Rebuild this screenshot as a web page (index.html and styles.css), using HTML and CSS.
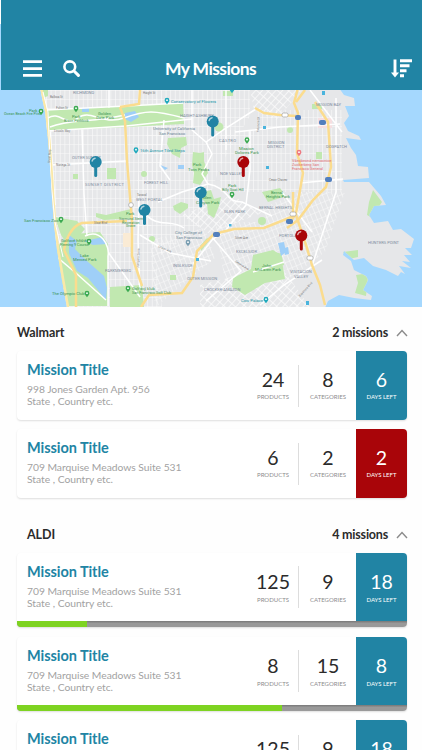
FILE: index.html
```html
<!DOCTYPE html>
<html lang="en">
<head>
  <meta charset="UTF-8" />
  <meta name="viewport" content="width=device-width, initial-scale=1.0"/>
  <title>My Missions</title>
  <link rel="stylesheet" href="styles.css">
</head>
<body>
  <header class="topbar">
    <svg class="icon-menu" viewBox="0 0 19 17"><path d="M0 1.7h19M0 8.7h19M0 15.3h19" stroke="#fff" stroke-width="2.8"/></svg>
    <svg class="icon-search" viewBox="0 0 17 17"><circle cx="6.8" cy="6.8" r="5.4" fill="none" stroke="#fff" stroke-width="2.6"/><path d="M11 11l4.4 4.4" stroke="#fff" stroke-width="3" stroke-linecap="round"/></svg>
    <h1>My Missions</h1>
    <svg class="icon-sort" viewBox="0 0 21 19"><path d="M4 .5v14M9 1.8h12M9 6.7h9.500M9 11.8h6.500M9 16.8h4" stroke="#fff" stroke-width="2.900"/><path d="M0 13.500h8l-4 5z" fill="#fff"/></svg>
  </header>

  <svg class="map" viewBox="0 90 422 217" preserveAspectRatio="none">
    <defs>
      <clipPath id="land">
        <path d="M40 88L45 112 48 140 51 180 52 198 54 225 57 250 62 280 67 308H325L328 301 339 295 354 298 371 300 372 296 363 290 368 280 366 276 354 270 351 261 343 255 344 251 354 260 364 258 373 266 386 270 398 276 401 272 405 274 399 266 411 268 402 261 410 262 404 255 412 255 405 248 411 248 414 239 401 229 393 230 388 221 374 223 369 215 374 206 386 205 381 196 369 182 344 182 343 180 369 178 368 167 358 166 356 155 351 148 346 138 361 140 359 136 348 131 344 123 349 116 345 106 355 106 354 98 344 95 339 88Z"/>
      </clipPath>
      <pattern id="blocks" width="4.6" height="9" patternUnits="userSpaceOnUse"><path d="M0 0H4.6M0 0V9" stroke="#fafafa" stroke-width="1.2"/></pattern>
      <pattern id="diagonal" width="5" height="7" patternUnits="userSpaceOnUse" patternTransform="rotate(42)"><path d="M0 0H5M0 0V7" stroke="#fcfcfc" stroke-width="1.4"/></pattern>
      <pattern id="slant" width="4.6" height="7" patternUnits="userSpaceOnUse" patternTransform="rotate(-22)"><path d="M0 0H4.6M0 0V7" stroke="#fafafa" stroke-width="1.1"/></pattern>
      <g id="pin">
        <path d="M0 4V13.5" stroke-width="3" stroke-linecap="round" stroke="currentColor"/>
        <circle r="6" fill="currentColor"/>
        <path d="M-3.6-1A4 4 0 0 1-.6-3.8" stroke="#fff" stroke-opacity=".65" fill="none" stroke-width="1.4" stroke-linecap="round"/>
      </g>
      <g id="place"><path d="M0 3.2C-1 1.5-2.4.8-2.4-.8A2.4 2.4 0 0 1 2.4-.8C2.4.8 1 1.5 0 3.2Z" fill="currentColor"/><circle cy="-.8" r=".9" fill="#fff"/></g>
    </defs>
    <rect y="88" width="422" height="220" fill="#a5d8fe"/>
    <g clip-path="url(#land)">
      <rect y="88" width="422" height="220" fill="#e6e7e9"/>
      <path d="M40 88h116l8 70-14 60 12 90H40z" fill="url(#blocks)"/>
      <path d="M156 88h94v28l-30 50-20 60-40 30-30-40z" fill="url(#blocks)"/>
      <path d="M258 110h84v82h-84zM220 130h40v62h-40z" fill="url(#blocks)"/>
      <path d="M250 88h54l-28 32-22-10z" fill="url(#diagonal)"/>
      <path d="M300 192h45l-20 60-35 26-28-70zM215 222h70v60h-60zM150 240l55-12 10 30-60 50z" fill="url(#slant)"/>
      <path d="M182 215l50-20 30 18-54 20zM200 285l80-20 30 42h-110z" fill="url(#diagonal)"/>

      <!-- parks -->
      <g fill="#c1e8b0">
        <path d="M46 110L122 106 183 103 184 124 127 127 48 131Z"/>
        <path d="M40 88h8v8l-5 2z"/>
        <path d="M168 138l18-1 1 8-6 3-1 10-8-4-5-10zM193 152l7 1 4-1v9l4 12-8 12-7-2 1-10-2-8z"/>
        <path d="M55 217l22 4 8 8-16 18-8-12zM56 246l18-12 26-2 8 12v62H68l-8-30zM110 287l32-2 2 22h-34z"/>
        <path d="M96 213l10 2 25-6 2 9-13 1-16 1-8-3z"/>
        <path d="M233 278l18-9 2-14 20-5 8 5 4 24-20 4-20 12-13-8zM272 255l9-2 3 12-8 2z"/>
        <path d="M203 192l8-2 3 9 7-2-2 9-5 12-6-4-1-10-6-6zM173 206l8-4 7 2v4l-8 6-6-4zM262 192l18-4 6 8-18 6z"/>
        <path d="M369 202l4-12 9 12-8 12 15 6-10 2-12-7zM356 275l7-1 5 4-2 18-11-3 3-10zM107 168h9v11h-9zM73 174h5v5h-5zM223 91h10v5h-10zM316 152h6v7h-6zM343 252l15-2v7l-9 2zM170 275h6v5h-6zM312 104h10v5h-10zM200 246l7-8 3 2-9 11z"/>
        <circle cx="152" cy="239" r="3"/><circle cx="262" cy="221" r="4"/><circle cx="290" cy="130" r="3"/><circle cx="219" cy="127" r="4.5"/><circle cx="144" cy="174" r="3"/>
      </g>
      <path d="M123 233h8v14h-8z" fill="#faebd5"/>
      <path d="M318 118h14v10h-14z" fill="#f6dfe1"/>

      <!-- lakes -->
      <path d="M69 235l8 6-2 8 12 12 17 15 3 12-1 12-18-22-11-7-8-18zM84 241l10-2 8-2 5 7-14 1zM125 113l10-2 4 6-8 5-6-3zM82 108h7v4h-7zM160 165l8 3-3 2zM178 165h6v4h-6zM278 243l6-1 2 10-5 4zM284 248l4-1 1 7-4 1z" fill="#9fcff8"/>

      <!-- side roads -->
      <g fill="none" stroke="#fff" stroke-width="1.5">
        <path d="M46 110l80-4 57-3M48 131l78-5 66-7M51 165l75-4M109 88v20M82 129l2 65 3 42M50 130l5 75"/>
        <path d="M48 118c12-8 18 10 30 0s24 8 46 0 30-8 60 0M50 127c20-8 40-4 75-12"/>
        <path d="M139 200l-1 40 2 50M140 235l30 18 41 8M164 120l-4 46 10 14M206 142l6 12-10 20 6 10-26 8-24 10M192 90v40l14 12 20-14 30-19M226 90v60M235 132l45-5 60-3M250 130v40l-4 35-20 25-14 10-22 28M336 98v94l-24 74M300 183l43-4M282 192l30 40M310 90l32 42"/>
        <path d="M85 236c16-8 25 10 23 20v50M108 252l32 45M57 257l20 17 29 26M142 210c14 20 28 8 42 18M211 236l30 35-35 30M253 272l31-10M260 305l24-20 38-25M208 184c22 4 16 18 34 18l30 14"/>
      </g>
      <!-- highways -->
      <g fill="none" stroke="#fbdc8e" stroke-width="2.5">
        <path d="M120 107l5 14 2 40 5 60v35l10 30M120 107l19-3 1-14"/>
        <path d="M255 108l9 5 16 2 16 1M298 88l-4 15 4 10-1 40 6 20-7 40-6 10M296 102l9-12M315 102l13 20 3 45-5 20-13 13-15 20-11 8"/>
        <path d="M141 307l8-12 33-2 11-16 4-26 17-17 20-5 30-1 20-8 12-5 10 30 6 20 8 20 5 20M293 192v20"/>
        <path d="M64 250c2-12 8-24 18-27l45-2M64 250l12 25v32"/>
      </g>
      <path d="M41 88L46 112 49 140 52 180 53 198 55 225 58 250 63 280 68 308" fill="none" stroke="#fae8a8" stroke-width="3"/>
      <path d="M43 92l5 20 3 70 4 40 8 35" fill="none" stroke="#fff" stroke-width="1"/>
    </g>

    <g class="shields">
      <rect x="295" y="115" width="6" height="5" rx="2"/><rect x="319" y="120" width="7" height="5" rx="2"/><rect x="325" y="177" width="7" height="5" rx="2"/><rect x="286" y="219" width="7" height="5" rx="2"/><rect x="213" y="232" width="7" height="5" rx="2"/>
    </g>
    <g fill="#fff" stroke="#a0a0a0" stroke-width=".7"><rect x="282" y="113" width="6" height="4" rx="1.5"/><rect x="290" y="212" width="6" height="4" rx="1.5"/><rect x="307" y="256" width="6" height="4" rx="1.5"/><circle cx="131" cy="205" r="2.4"/></g>

    <g class="area">
      <text x="73" y="94">RICHMOND</text>
      <text x="180" y="117">HAIGHT-ASHBURY</text>
      <text x="72" y="159">OUTER SUNSET</text>
      <text x="85" y="185.500" textLength="39">SUNSET DISTRICT</text>
      <text x="144" y="184">FOREST HILL</text>
      <text x="136" y="201">WEST PORTAL</text>
      <text x="219" y="142" textLength="17">CASTRO</text>
      <text x="268" y="144">MISSION</text><text x="267" y="148">DISTRICT</text>
      <text x="316" y="106">MISSION BAY</text>
      <text x="326" y="148">DOGPATCH</text>
      <text x="220" y="175">NOE VALLEY</text>
      <text x="224" y="213">GLEN PARK</text>
      <text x="259" y="209">BERNAL HEIGHTS</text>
      <text x="279" y="237">PORTOLA</text>
      <text x="236" y="253">EXCELSIOR</text>
      <text x="290" y="273">VISITACION</text><text x="294" y="277.500">VALLEY</text>
      <text x="368" y="243.500">HUNTERS POINT</text>
      <text x="105" y="271.500">PARKMERGED</text>
      <text x="173" y="267">INGLESIDE</text>
      <text x="187" y="280">OUTER MISSION</text>
      <text x="204" y="291">CROCKER-AMAZON</text>
    </g>
    <g class="spot">
      <text x="29" y="111.500">Park</text><text x="4" y="115" class="tiny">Ocean Beach Fire Pits</text>
      <text x="72" y="117.500">Park</text><text x="64" y="122" class="tiny">Bison Paddock</text>
      <text x="98" y="114.500">Golden</text><text x="96" y="119">Gate Park</text>
      <text x="193" y="166">Park</text><text x="188" y="170.500">Twin Peaks</text>
      <text x="203" y="199">Glen</text><text x="196" y="203.500">Canyon Park</text>
      <text x="239" y="149.500">Mission</text><text x="235" y="153.500">Dolores Park</text>
      <text x="228" y="187">Park</text><text x="222" y="191" class="tiny">Billy Goat Hill</text>
      <text x="271" y="194">Bernal</text><text x="266" y="198">Heights Park</text>
      <text x="126" y="215">Park</text><text x="119" y="219.500" class="tiny">Sigmund Stern</text><text x="122" y="223.500" class="tiny">Recreation</text><text x="126" y="227" class="tiny">Grove</text>
      <text x="24" y="221.500">San Francisco Zoo</text>
      <text x="61" y="241.500">Golfové hřiště</text><text x="60" y="245.500" class="tiny">Fleming 9 Course</text>
      <text x="80" y="256.500">Lake</text><text x="73" y="261">Merced Park</text>
      <text x="52" y="295">The Olympic Club</text>
      <text x="132" y="289.500">Golfový klub</text><text x="132" y="293.500" class="tiny">San Francisco Golf Club</text>
      <text x="262" y="266.500">John</text><text x="255" y="271">McLaren Park</text>
    </g>
    <g class="sight">
      <text x="171" y="102.500">Conservatory of Flowers</text>
      <text x="140" y="152">16th Avenue Tiled Steps</text>
      <text x="241" y="302">Cow Palace</text>
    </g>
    <g class="school">
      <text x="153" y="130">University of California</text><text x="159" y="134.500">San Francisco</text>
      <text x="175" y="234">City College of</text><text x="176" y="238.500">San Francisco</text>
    </g>
    <g class="hospital"><text x="292" y="162">Všeobecná nemocnice</text><text x="292" y="166">Zuckerberg San</text><text x="292" y="170">Francisco General</text></g>
    <g class="street">
      <text x="50" y="98">Balboa St</text><text x="56" y="109">Fulton St</text><text x="54" y="132">Lincoln Way</text><text x="56" y="166">Noriega St</text><text x="143" y="94">Haight St</text><text x="94" y="223.500">Sloat Blvd</text><text x="269" y="181">Cesar Chavez</text><text x="137" y="196">Taraval</text><text x="235" y="239">Silver Ave</text>
      <text transform="translate(50 163) rotate(-87)">Great Hwy</text><text transform="translate(139 268) rotate(-88)">Junipero Serra</text><text transform="translate(259 132) rotate(-88)">Valencia St</text><text transform="translate(158 247) rotate(24)">Ocean Ave</text><text transform="translate(300 297) rotate(-48)">Bayshore Blvd</text><text transform="translate(235 262) rotate(32)">Geneva Ave</text>
    </g>

    <g color="#3caa52">
      <use href="#place" x="41" y="112"/><use href="#place" x="76" y="109"/><use href="#place" x="247" y="140.500"/><use href="#place" x="232" y="195"/><use href="#place" x="61" y="220"/><use href="#place" x="89" y="242"/><use href="#place" x="87" y="294"/><use href="#place" x="128" y="289"/>
    </g>
    <g color="#20a9bc"><use href="#place" x="167" y="101"/><use href="#place" x="136" y="150.500"/><use href="#place" x="266" y="300"/><use href="#place" x="232" y="90"/></g>
    <use href="#place" x="299" y="153" color="#ee7981"/>
    <use href="#place" x="188" y="243" color="#789db1"/>
    <path d="M322 91h3v4h-3zM306 301h3v4h-3zM263 126h3v3h-3zM266 166h3v3h-3zM229 224h2.500v2.500h-2.500zM196 258h3v3h-3z" fill="#4ab4dd"/>

    <g color="#2184a4">
      <use href="#pin" x="95.700" y="162"/><use href="#pin" x="212.700" y="121.500"/><use href="#pin" x="200.700" y="192.500"/><use href="#pin" x="144.500" y="210"/>
    </g>
    <g color="#a90509">
      <use href="#pin" x="243.300" y="162"/><use href="#pin" x="301.300" y="235.500"/>
    </g>
  </svg>

  <main>
    <section class="store">
      <div class="store-head">
        <h2>Walmart</h2>
        <span>2 missions</span>
        <svg class="chevron" viewBox="0 0 12 8"><path d="M1 7l5-5.500 5 5.500" fill="none" stroke="#8b8b8b" stroke-width="1.400"/></svg>
      </div>
      <article class="card">
        <div class="row">
          <div class="info"><h3>Mission Title</h3><p>998 Jones Garden Apt. 956<br>State , Country etc.</p></div>
          <div class="stat products"><b>24</b><small>PRODUCTS</small></div>
          <div class="stat categories"><b>8</b><small>CATEGORIES</small></div>
          <div class="stat days"><b>6</b><small>DAYS LEFT</small></div>
        </div>
      </article>
      <article class="card">
        <div class="row">
          <div class="info"><h3>Mission Title</h3><p>709 Marquise Meadows Suite 531<br>State , Country etc.</p></div>
          <div class="stat products"><b>6</b><small>PRODUCTS</small></div>
          <div class="stat categories"><b>2</b><small>CATEGORIES</small></div>
          <div class="stat days urgent"><b>2</b><small>DAYS LEFT</small></div>
        </div>
      </article>
    </section>

    <section class="store started">
      <div class="store-head">
        <h2>ALDI</h2>
        <span>4 missions</span>
        <svg class="chevron" viewBox="0 0 12 8"><path d="M1 7l5-5.500 5 5.500" fill="none" stroke="#8b8b8b" stroke-width="1.400"/></svg>
      </div>
      <article class="card">
        <div class="row">
          <div class="info"><h3>Mission Title</h3><p>709 Marquise Meadows Suite 531<br>State , Country etc.</p></div>
          <div class="stat products"><b>125</b><small>PRODUCTS</small></div>
          <div class="stat categories"><b>9</b><small>CATEGORIES</small></div>
          <div class="stat days"><b>18</b><small>DAYS LEFT</small></div>
        </div>
        <div class="progress"><div style="width: 18%"></div></div>
      </article>
      <article class="card">
        <div class="row">
          <div class="info"><h3>Mission Title</h3><p>709 Marquise Meadows Suite 531<br>State , Country etc.</p></div>
          <div class="stat products"><b>8</b><small>PRODUCTS</small></div>
          <div class="stat categories"><b>15</b><small>CATEGORIES</small></div>
          <div class="stat days"><b>8</b><small>DAYS LEFT</small></div>
        </div>
        <div class="progress"><div style="width: 68%"></div></div>
      </article>
      <article class="card last">
        <div class="row">
          <div class="info"><h3>Mission Title</h3></div>
          <div class="stat products"><b>125</b></div>
          <div class="stat categories"><b>9</b></div>
          <div class="stat days"><b>18</b></div>
        </div>
      </article>
    </section>
  </main>
</body>
</html>
```

FILE: styles.css
```css
* {
  box-sizing: border-box;
}
body {
  margin: 0;
  height: 750px;
  overflow: hidden;
  background: #fefefe;
  font-family: Lato, sans-serif;
  color: #2b2b2b;
}
h1, h2, h3, p {
  margin: 0;
}
svg {
  display: block;
}

/* top bar */
.topbar {
  display: flex;
  align-items: flex-end;
  height: 90px;
  padding: 0 10px 10px 22px;
  border-style: solid;
  border-width: 0 0 0 1.6px;
  border-image: linear-gradient(#fff 25px, #a5d8fe 25px) 2;
  background: #2184a4;
  color: #fff;
}
.icon-menu {
  width: 19px;
  height: 17px;
  margin-bottom: 3px;
}
.icon-search {
  width: 17px;
  height: 17px;
  margin: 0 0 3px 21px;
}
.topbar h1 {
  flex: 1;
  margin-left: 85px;
  font-size: 17.5px;
  line-height: 23px;
  font-weight: bold;
  letter-spacing: -0.6px;
  white-space: nowrap;
}
.icon-sort {
  width: 21px;
  height: 19px;
  margin-bottom: 2px;
}

/* map */
.map {
  width: 422px;
  height: 217px;
  font-family: Roboto, sans-serif;
  font-size: 4.2px;
}
.area {
  font-size: 4.1px;
  fill: #7d8b9d;
}
.spot {
  fill: #3a9350;
}
.tiny {
  font-size: 3.7px;
}
.sight {
  fill: #2196a8;
}
.school {
  fill: #6d8796;
}
.hospital {
  fill: #e06c73;
  font-size: 3.9px;
}
.street {
  fill: #777;
  font-size: 3px;
}
.shields {
  fill: #527fbd;
}

/* missions */
.store {
  padding: 0 15px 0 17px;
}
.store-head {
  display: flex;
  align-items: center;
  height: 44px;
  padding-top: 7px;
}
.store-head h2 {
  flex: 1;
  font-size: 12.5px;
  font-weight: bold;
  letter-spacing: -0.1px;
}
.store-head span {
  margin-top: -1px;
  font-size: 12.5px;
  font-weight: bold;
  letter-spacing: -0.2px;
}
.chevron {
  width: 12px;
  height: 8px;
  margin: 1px -1px 0 8px;
}
.card {
  margin-bottom: 9px;
  overflow: hidden;
  border-radius: 4px;
  background: #fff;
  box-shadow: 0 1px 2px rgba(0, 0, 0, 0.13);
}
.row {
  display: flex;
  height: 69px;
}
.info {
  flex: 1;
  padding: 9px 0 0 10px;
}
.info h3 {
  font-size: 14.5px;
  line-height: 19px;
  letter-spacing: -0.05px;
  color: #2184a4;
}
.info p {
  margin-top: 4px;
  font-size: 10.3px;
  line-height: 12px;
  letter-spacing: -0.02px;
  color: #a2a2a2;
}
.stat {
  padding-top: 17px;
  text-align: center;
}
.stat b {
  display: block;
  font-size: 19.5px;
  line-height: 23px;
  font-weight: normal;
}
.stat small {
  display: block;
  margin-top: 2px;
  font-size: 6px;
  line-height: 8px;
  color: #8d8d8d;
}
.products {
  width: 51px;
  padding-left: 1px;
}
.categories {
  width: 58px;
  padding-left: 2px;
  background: linear-gradient(#ddd, #ddd) 0 50% / 1px 42px no-repeat;
}
.days {
  width: 51px;
  background: #2184a4;
  color: #fff;
}
.days small {
  color: #fff;
}
.urgent {
  background: #a90509;
}

.started {
  padding-top: 2px;
}
.started .store-head h2 {
  padding-left: 10px;
}
.started .row {
  height: 68px;
}
.started .card {
  margin-bottom: 9.5px;
}
.started .stat small {
  margin-top: 3px;
}
.progress {
  height: 6px;
  background: linear-gradient(#777, #999 40%);
}
.progress div {
  height: 6px;
  background: #7ed321;
}

/* the last card runs off the screen */
.started .last,
.last .row {
  height: 30px;
  margin: 0;
}
.last {
  border-radius: 4px 4px 0 0;
}
.last .categories {
  background-position: 0 15px;
}
```
